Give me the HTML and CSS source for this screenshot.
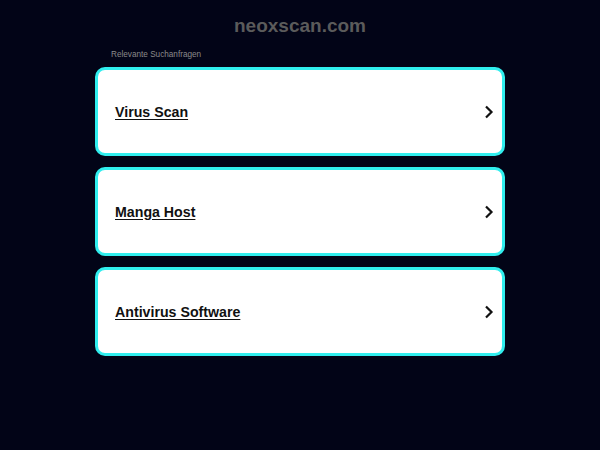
FILE: index.html
```html
<!DOCTYPE html>
<html>
<head>
<meta charset="utf-8">
<link rel="stylesheet" href="styles.css">
</head>
<body>
<div class="page">
  <h1 class="domain">neoxscan.com</h1>
  <div class="wrap">
    <div class="label">Relevante Suchanfragen</div>
    <div class="list">
      <a class="card" href="#"><span class="txt">Virus Scan</span><svg class="chev" width="10" height="14" viewBox="0 0 10 14"><path d="M2 1.5 L7.5 7 L2 12.5" fill="none" stroke="#111" stroke-width="2.2"/></svg></a>
      <a class="card" href="#"><span class="txt">Manga Host</span><svg class="chev" width="10" height="14" viewBox="0 0 10 14"><path d="M2 1.5 L7.5 7 L2 12.5" fill="none" stroke="#111" stroke-width="2.2"/></svg></a>
      <a class="card" href="#"><span class="txt">Antivirus Software</span><svg class="chev" width="10" height="14" viewBox="0 0 10 14"><path d="M2 1.5 L7.5 7 L2 12.5" fill="none" stroke="#111" stroke-width="2.2"/></svg></a>
    </div>
  </div>
</div>
</body>
</html>
```
FILE: styles.css
```css
html, body {
  margin: 0;
  padding: 0;
  background: #020417;
  font-family: "Liberation Sans", Arial, sans-serif;
}
.page {
  width: 600px;
  height: 450px;
}
.domain {
  margin: 0;
  padding-top: 14px;
  height: 24px;
  line-height: 24px;
  text-align: center;
  font-size: 19px;
  font-weight: bold;
  color: #5b5b5b;
}
.wrap {
  width: 410px;
  margin: 0 auto;
}
.label {
  margin-top: 11px;
  padding-left: 16px;
  font-size: 8.2px;
  line-height: 12px;
  color: #8a8a8a;
}
.list {
  margin-top: 6px;
  display: flex;
  flex-direction: column;
  gap: 11px;
}
.card {
  box-sizing: border-box;
  height: 89px;
  border: 3px solid #30eeee;
  border-radius: 10px;
  background: #fff;
  display: flex;
  align-items: center;
  justify-content: space-between;
  padding: 0 8px 0 17px;
  text-decoration: none;
}
.txt {
  font-size: 14.2px;
  font-weight: bold;
  color: #111;
  text-decoration: underline;
  text-underline-offset: 2px;
}
.chev {
  display: block;
}
```
